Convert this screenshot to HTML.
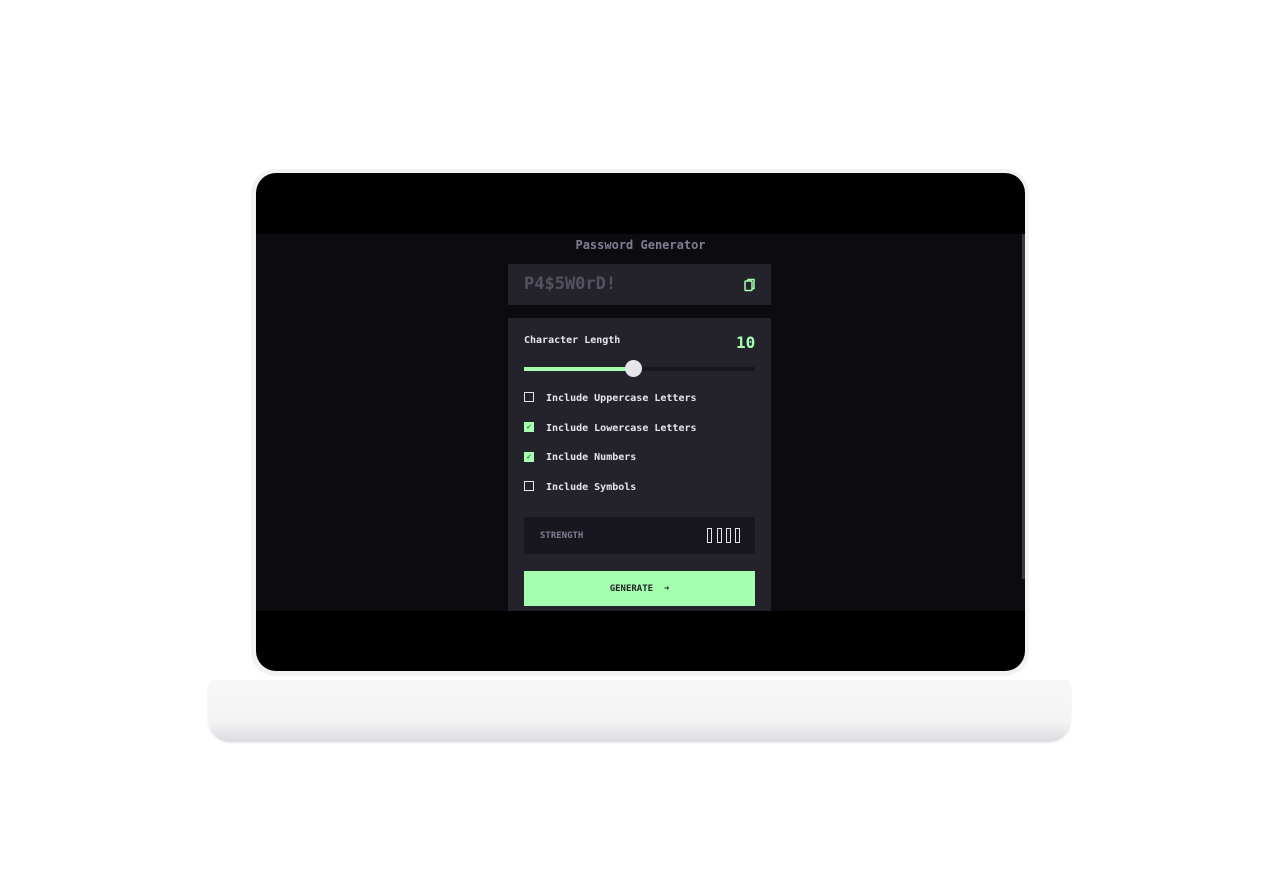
<!DOCTYPE html>
<html><head><style>
*{margin:0;padding:0;box-sizing:border-box}
body{width:1280px;height:896px;background:#fff;position:relative;overflow:hidden;font-family:"DejaVu Sans Mono","Liberation Mono",monospace}
.abs{position:absolute}
.lid{left:251px;top:169px;width:778px;height:507px;border-radius:24px;background:#f2f2f4}
.scr{left:256px;top:173px;width:769px;height:498px;border-radius:20px;background:#000;overflow:hidden}
.app{left:0;top:61px;width:769px;height:377px;background:#0b0b10;overflow:hidden}
.base{left:208px;top:680px;width:863px;height:62px;border-radius:8px 8px 22px 22px;background:linear-gradient(#f7f7f8 0,#f4f4f5 65%,#ebebee 80%,#dcdce0 100%);box-shadow:0 1px 2px rgba(0,0,0,.08)}
.t{color:#e6e5ea;font-size:10px;font-weight:bold}
.cb{width:10px;height:10px;border:1.5px solid #e6e5ea}
.cbon{background:#a4ffaf;border-color:#a4ffaf;color:#18171f;font-size:8px;line-height:8px;text-align:center;font-weight:bold}
</style></head><body>
<div class="abs lid"></div>
<div class="abs base"></div>
<div class="abs scr">
 <div class="abs app">
  <div class="abs" style="left:766px;top:0;width:3px;height:345px;background:#3a3a40"></div>
  <div class="abs" style="left:0;width:769px;top:4px;text-align:center;color:#817d92;font-size:12px;font-weight:bold">Password Generator</div>
  <div class="abs" style="left:252px;top:30px;width:263px;height:41px;background:#24232c">
   <div class="abs" style="left:16px;top:10px;color:#54525e;font-size:17px;font-weight:bold">P4$5W0rD!</div>
   <svg class="abs" style="left:236px;top:14px" width="12" height="14" viewBox="0 0 12 14"><rect x="1" y="3" width="7" height="9.5" rx="1" fill="none" stroke="#a4ffaf" stroke-width="1.5"/><path d="M4 3V1.5h6v9H8" fill="none" stroke="#a4ffaf" stroke-width="1.5"/></svg>
  </div>
  <div class="abs" style="left:252px;top:84px;width:263px;height:300px;background:#24232c">
   <div class="abs t" style="left:16px;top:17px">Character Length</div>
   <div class="abs" style="left:228px;top:15px;color:#a4ffaf;font-size:16px;font-weight:bold">10</div>
   <div class="abs" style="left:16px;top:49px;width:231px;height:4px;background:#18171f"></div>
   <div class="abs" style="left:16px;top:49px;width:110px;height:4px;background:#a4ffaf"></div>
   <div class="abs" style="left:117px;top:42px;width:17px;height:17px;border-radius:50%;background:#e6e5ea"></div>
   <div class="abs cb" style="left:16px;top:74px"></div><div class="abs t" style="left:38px;top:75px">Include Uppercase Letters</div>
   <div class="abs cb cbon" style="left:16px;top:104px">✓</div><div class="abs t" style="left:38px;top:105px">Include Lowercase Letters</div>
   <div class="abs cb cbon" style="left:16px;top:134px">✓</div><div class="abs t" style="left:38px;top:134px">Include Numbers</div>
   <div class="abs cb" style="left:16px;top:163px"></div><div class="abs t" style="left:38px;top:164px">Include Symbols</div>
   <div class="abs" style="left:16px;top:199px;width:231px;height:37px;background:#18171f">
    <div class="abs" style="left:16px;top:14px;color:#817d92;font-size:9px;font-weight:bold">STRENGTH</div>
    <div class="abs" style="left:183px;top:11px;width:5px;height:15px;border:1.5px solid #e6e5ea"></div>
    <div class="abs" style="left:193px;top:11px;width:5px;height:15px;border:1.5px solid #e6e5ea"></div>
    <div class="abs" style="left:202px;top:11px;width:5px;height:15px;border:1.5px solid #e6e5ea"></div>
    <div class="abs" style="left:211px;top:11px;width:5px;height:15px;border:1.5px solid #e6e5ea"></div>
   </div>
   <div class="abs" style="left:16px;top:253px;width:231px;height:35px;background:#a4ffaf;text-align:center;line-height:37px;color:#24232c;font-size:9px;font-weight:bold">GENERATE &nbsp;➜</div>
  </div>
 </div>
</div>
</body></html>
